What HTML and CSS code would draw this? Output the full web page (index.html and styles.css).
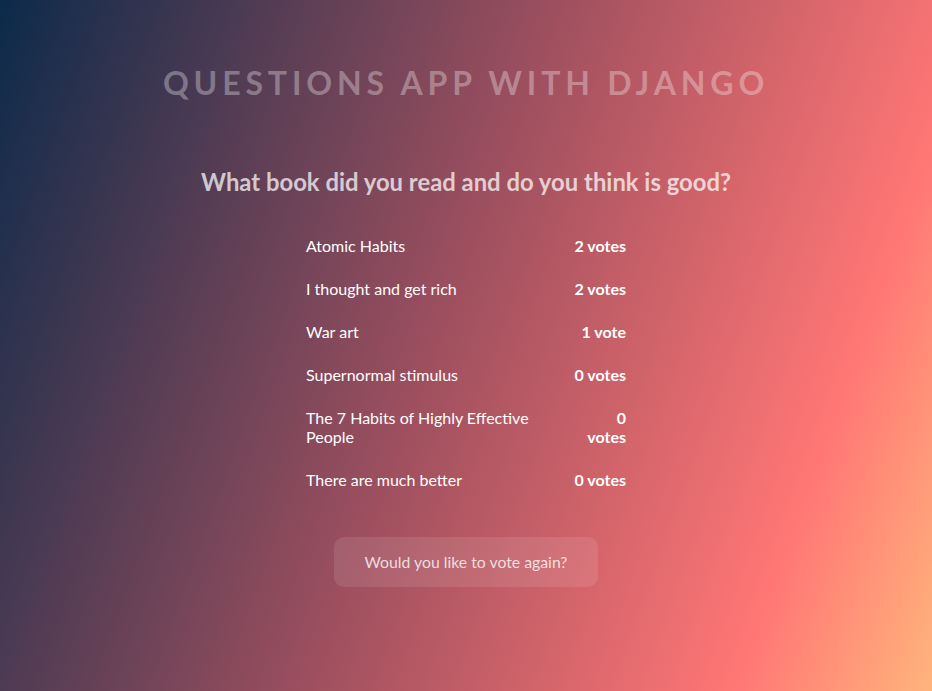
FILE: index.html
```
<!DOCTYPE html>
<html lang="en">
<head>
<meta charset="utf-8">
<title>Questions App with Django</title>
<link rel="stylesheet" href="styles.css">
</head>
<body>
<main class="page">
  <h1 class="app-title">Questions App with Django</h1>
  <h2 class="question">What book did you read and do you think is good?</h2>
  <ul class="results">
    <li class="result"><span class="choice">Atomic Habits</span><span class="votes">2 votes</span></li>
    <li class="result"><span class="choice">I thought and get rich</span><span class="votes">2 votes</span></li>
    <li class="result"><span class="choice">War art</span><span class="votes">1 vote</span></li>
    <li class="result"><span class="choice">Supernormal stimulus</span><span class="votes">0 votes</span></li>
    <li class="result"><span class="choice">The 7 Habits of Highly Effective People</span><span class="votes">0 votes</span></li>
    <li class="result"><span class="choice">There are much better</span><span class="votes">0 votes</span></li>
  </ul>
  <a class="again" href="#">Would you like to vote again?</a>
</main>
</body>
</html>
```
FILE: styles.css
```
html, body {
  margin: 0;
  padding: 0;
  height: 100%;
}
body {
  font-family: Lato, "Open Sans", sans-serif;
  background: linear-gradient(110deg, #0c2a4a 0%, #a0505f 48%, #ff7675 83%, #ffb47c 100%);
  color: #fff;
  overflow: hidden;
}
.page {
  display: flex;
  flex-direction: column;
  align-items: center;
  padding-top: 64px;
}
.app-title {
  margin: 0;
  font-size: 32px;
  font-weight: 700;
  letter-spacing: 4.85px;
  text-transform: uppercase;
  color: rgba(255, 255, 255, 0.32);
  line-height: 38px;
}
.question {
  margin: 65px 0 0;
  font-size: 23.85px;
  font-weight: 700;
  line-height: 30px;
  color: rgba(255, 255, 255, 0.72);
}
.results {
  list-style: none;
  margin: 27px 0 0;
  padding: 0;
  width: 320px;
}
.result {
  display: flex;
  justify-content: space-between;
  padding: 12px 0;
  font-size: 16px;
  line-height: 19px;
}
.votes {
  font-weight: 700;
  text-align: right;
}
.again {
  margin-top: 36px;
  display: block;
  padding: 15px 31px;
  border-radius: 10px;
  background: rgba(255, 255, 255, 0.1);
  color: rgba(255, 255, 255, 0.78);
  text-decoration: none;
  font-size: 15.8px;
  line-height: 20px;
}
```
